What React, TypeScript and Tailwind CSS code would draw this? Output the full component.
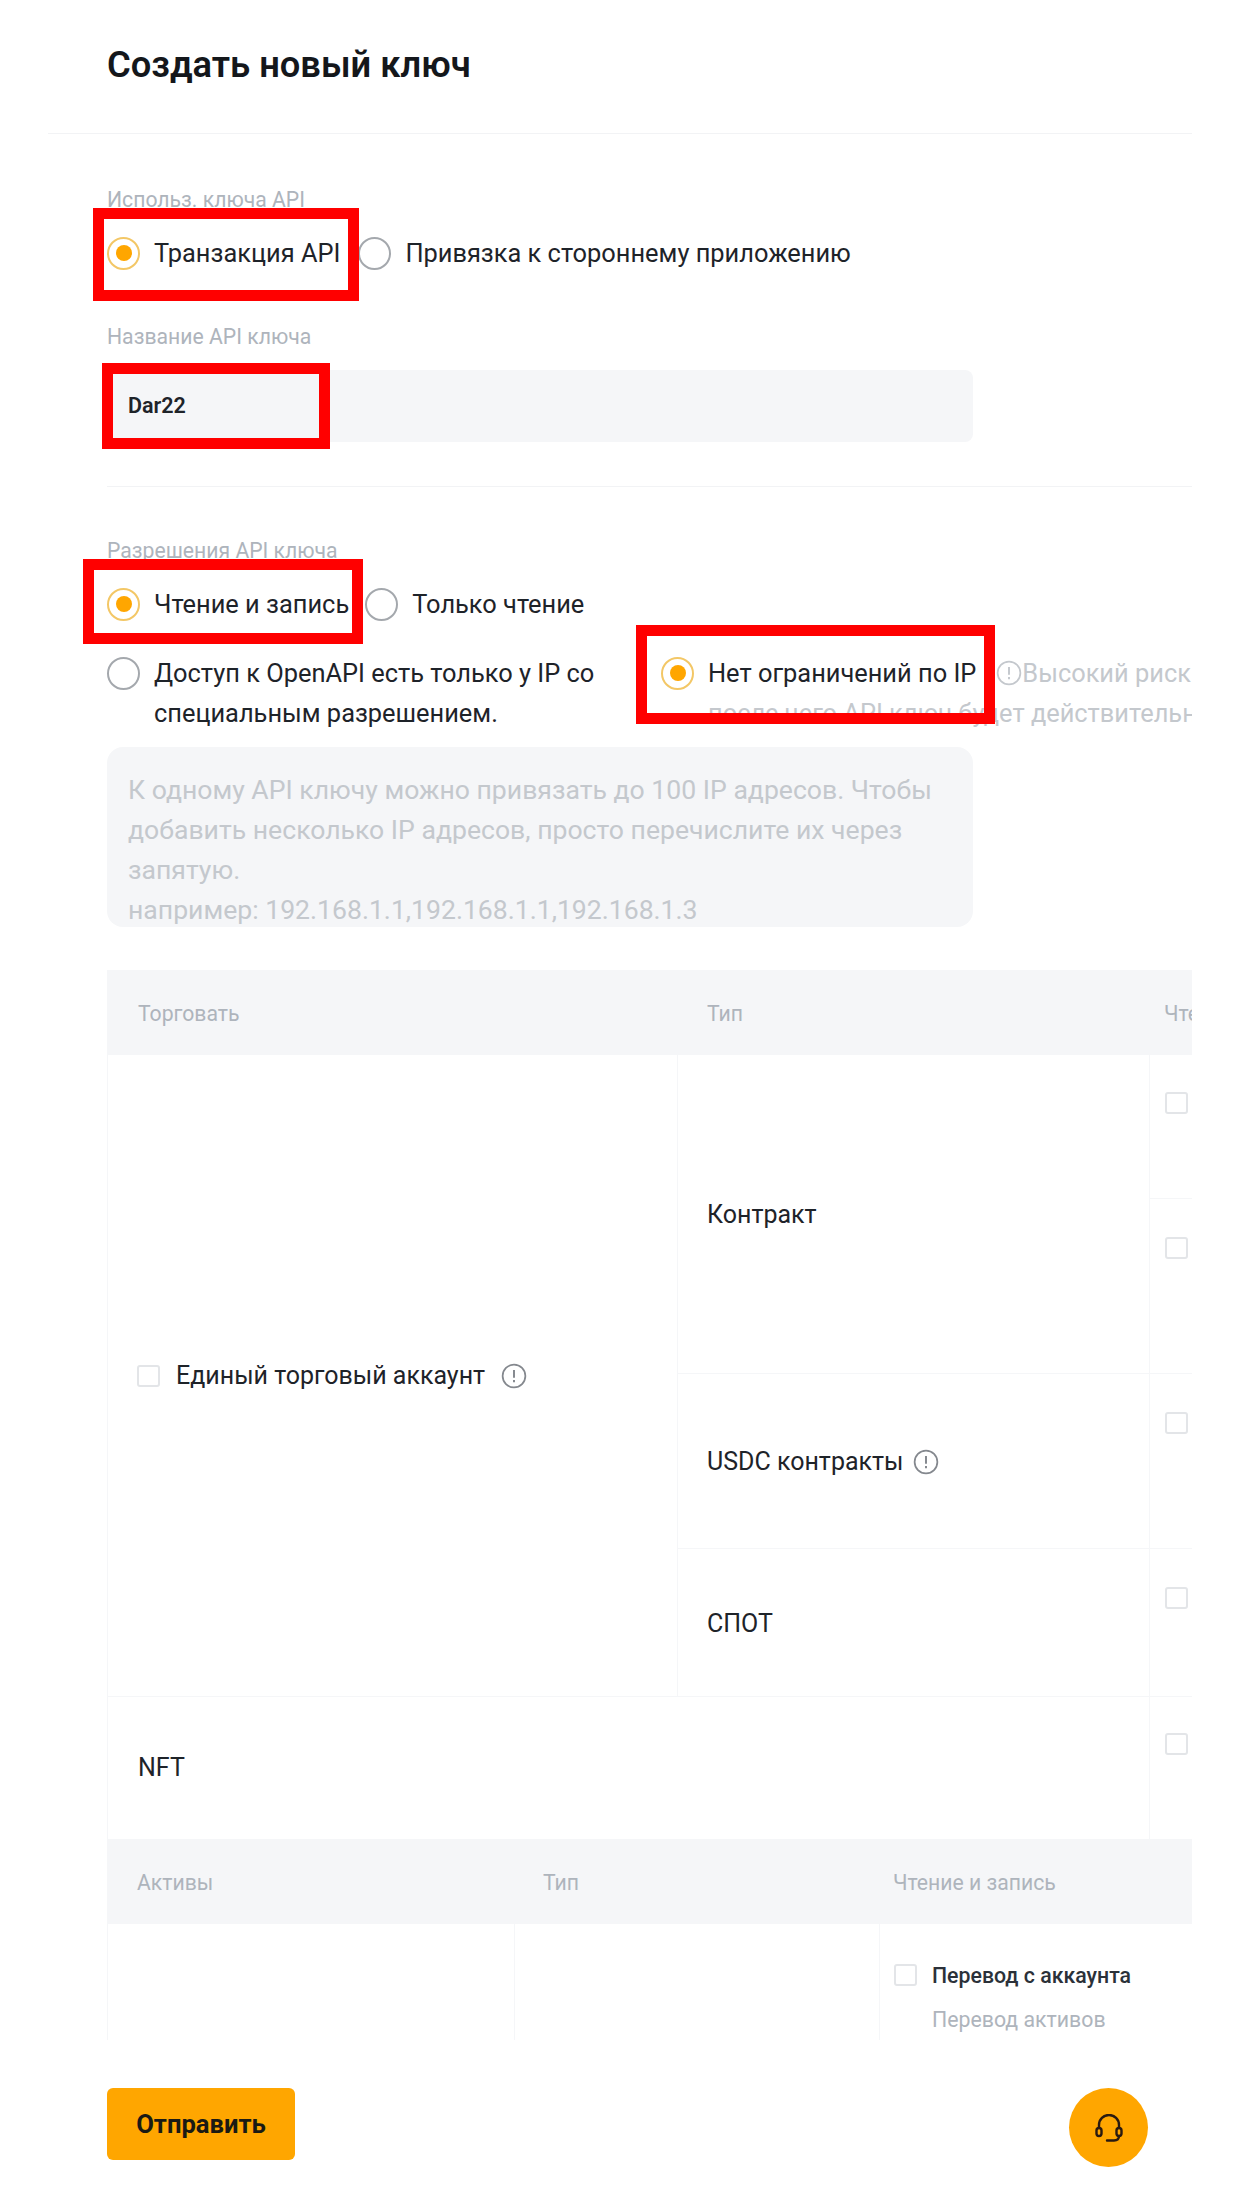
const FONT = "font-['Roboto','Noto_Sans',sans-serif]";

function Radio({ on }: { on?: boolean }) {
  return (
    <span className={`flex h-[33px] w-[33px] shrink-0 items-center justify-center rounded-full border-2 ${on ? 'border-[#f3c766]' : 'border-[#a4a8ad]'}`}>
      {on && <span className="h-[16px] w-[16px] rounded-full bg-[#ffa600]" />}
    </span>
  );
}

function Info({ className = '' }: { className?: string }) {
  return (
    <svg viewBox="0 0 24 24" fill="none" className={`h-[26px] w-[26px] shrink-0 ${className}`} stroke="currentColor">
      <circle cx="12" cy="12" r="10.5" strokeWidth="1.6" />
      <path d="M12 6.5v7" strokeWidth="1.8" />
      <path d="M12 15.8v2" strokeWidth="1.8" />
    </svg>
  );
}

function Check() {
  return <span className="block h-[22px] w-[23px] shrink-0 rounded-[3px] border-2 border-[#e3e5e8] bg-white" />;
}

function Label({ children }: { children: React.ReactNode }) {
  return <div className="h-[28px] text-[21.2px] leading-[28px] text-[#aeb4bc]">{children}</div>;
}

function Option({ on, children }: { on?: boolean; children: React.ReactNode }) {
  return (
    <div className="flex items-center gap-[14px]">
      <Radio on={on} />
      <span className="whitespace-nowrap text-[25.4px] leading-[40px] text-[#1e2329]">{children}</span>
    </div>
  );
}

function Mark({ className }: { className: string }) {
  return <div className={`pointer-events-none absolute border-[11px] border-[#ff0000] ${className}`} />;
}

export default function App() {
  return (
    <div className={`relative h-[2191px] w-[1242px] overflow-hidden bg-white ${FONT}`}>
      <div className="h-[2040px] w-[1192px] overflow-hidden">
        <div className="ml-[48px] flex h-[134px] items-center border-b border-[#f2f3f5] pb-[4px] pl-[59px]">
          <h1 className="text-[36.3px] font-semibold leading-[44px] text-[#14171b]">Создать новый ключ</h1>
        </div>

        <div className="pl-[107px]">
          <div className="pt-[52px]"><Label>Использ. ключа API</Label></div>
          <div className="mt-[19px] flex h-[40px] items-center gap-[18px]">
            <Option on>Транзакция API</Option>
            <Option>Привязка к стороннему приложению</Option>
          </div>
          <div className="mt-[50px]"><Label>Название API ключа</Label></div>
          <div className="mt-[19px] flex h-[72px] w-[866px] items-center rounded-[8px] bg-[#f5f6f8] pl-[21px] text-[21.5px] font-semibold text-[#1e2329]">Dar22</div>
          <div className="mt-[44px] border-t border-[#f2f3f5]" />

          <div className="mt-[50px]"><Label>Разрешения API ключа</Label></div>
          <div className="mt-[19px] flex h-[40px] items-center gap-[16px]">
            <Option on>Чтение и запись</Option>
            <Option>Только чтение</Option>
          </div>
          <div className="mt-[29px] flex items-start">
            <div className="flex w-[554px] shrink-0 gap-[14px]">
              <div className="pt-[4px]"><Radio /></div>
              <span className="w-[470px] text-[25.4px] leading-[40px] text-[#1e2329]">Доступ к OpenAPI есть только у IP со специальным разрешением.</span>
            </div>
            <div className="min-w-0 flex-1">
              <div className="flex items-center whitespace-nowrap">
                <Option on>Нет ограничений по IP</Option>
                <Info className="ml-[20px] text-[#c4c8cd]" />
                <span className="text-[25.4px] leading-[40px] text-[#c4c8cd]">Высокий риск</span>
              </div>
              <div className="whitespace-nowrap pl-[47px] text-[25.4px] leading-[40px] text-[#c4c8cd]">после чего API ключ будет действительным</div>
            </div>
          </div>

          <div className="mt-[14px] h-[180px] w-[866px] overflow-hidden rounded-[16px] bg-[#f5f6f8] px-[21px] pt-[23px] text-[26.6px] leading-[40px] text-[#c4c8cd]">
            <p>К одному API ключу можно привязать до 100 IP адресов. Чтобы добавить несколько IP адресов, просто перечислите их через запятую.</p>
            <p>например: 192.168.1.1,192.168.1.1,192.168.1.3</p>
          </div>

          <div className="mt-[43px] flex h-[85px] items-center whitespace-nowrap bg-[#f5f6f8] pt-[2px] text-[21.2px] text-[#aeb4bc]">
            <span className="w-[600px] shrink-0 pl-[31px]">Торговать</span>
            <span className="w-[457px] shrink-0">Тип</span>
            <span>Чтение и запись</span>
          </div>

          <div className="grid w-[1300px] grid-cols-[569px_472px_1fr] grid-rows-[144px_175px_175px_147px_143px] border-l border-[#f5f6f8] text-[25px] text-[#1e2329]">
            <div className="col-start-1 row-span-4 row-start-1 flex items-center gap-[16px] pl-[29px]">
              <Check />
              <span>Единый торговый аккаунт</span>
              <Info className="text-[#84888e]" />
            </div>
            <div className="col-start-2 row-span-2 row-start-1 flex items-center border-b border-l border-[#f5f6f8] pl-[29px] pt-[2px]">Контракт</div>
            <div className="col-start-2 row-start-3 flex items-center gap-[10px] border-b border-l border-[#f5f6f8] pl-[29px] pt-[2px]">
              <span>USDC контракты</span>
              <Info className="text-[#84888e]" />
            </div>
            <div className="col-start-2 row-start-4 flex items-center border-l border-[#f5f6f8] pl-[29px] pt-[2px]">СПОТ</div>
            <div className="col-start-3 row-start-1 border-b border-l border-[#f5f6f8] pl-[15px] pt-[37px]"><Check /></div>
            <div className="col-start-3 row-start-2 border-b border-l border-[#f5f6f8] pl-[15px] pt-[38px]"><Check /></div>
            <div className="col-start-3 row-start-3 border-b border-l border-[#f5f6f8] pl-[15px] pt-[38px]"><Check /></div>
            <div className="col-start-3 row-start-4 border-l border-[#f5f6f8] pl-[15px] pt-[38px]"><Check /></div>
            <div className="col-span-2 col-start-1 row-start-5 flex items-center border-t border-[#f5f6f8] pl-[30px]">NFT</div>
            <div className="col-start-3 row-start-5 border-l border-t border-[#f5f6f8] pl-[15px] pt-[36px]"><Check /></div>
          </div>

          <div className="flex h-[85px] items-center bg-[#f5f6f8] pt-[2px] text-[21.2px] text-[#aeb4bc]">
            <span className="w-[436px] shrink-0 pl-[30px]">Активы</span>
            <span className="w-[350px] shrink-0">Тип</span>
            <span>Чтение и запись</span>
          </div>
          <div className="grid h-[200px] grid-cols-[406px_365px_1fr] border-l border-[#f5f6f8]">
            <div />
            <div className="border-l border-[#f5f6f8]" />
            <div className="border-l border-[#f5f6f8] pl-[14px] pt-[36px]">
              <div className="flex items-center gap-[15px]">
                <Check />
                <span className="mt-[2px] whitespace-nowrap text-[21.3px] font-medium leading-[28px] text-[#2b3139]">Перевод с аккаунта</span>
              </div>
              <div className="mt-[16px] pl-[38px] text-[21.3px] leading-[28px] text-[#aeb4bc]">Перевод активов</div>
            </div>
          </div>
        </div>
      </div>

      <div className="flex items-start justify-between pl-[107px] pr-[94px] pt-[48px]">
        <button className="flex h-[72px] w-[188px] items-center justify-center rounded-[6px] bg-[#ffa600] text-[25.6px] font-bold text-[#1a1a14]">Отправить</button>
        <button className="flex h-[79px] w-[79px] items-center justify-center rounded-full bg-[#ffa600]">
          <svg viewBox="0 0 28 28" fill="none" stroke="#2a1a10" strokeWidth="2.4" strokeLinecap="round" className="h-[28px] w-[28px]">
            <path d="M4 14v-3a10 10 0 0 1 20 0v3" />
            <rect x="1.5" y="14" width="5" height="8" rx="2.5" />
            <rect x="21.5" y="14" width="5" height="8" rx="2.5" />
            <path d="M24 22c0 3-2 4.5-5 4.5h-7" />
          </svg>
        </button>
      </div>

      <Mark className="left-[93px] top-[208px] h-[93px] w-[266px]" />
      <Mark className="left-[102px] top-[363px] h-[86px] w-[228px]" />
      <Mark className="left-[83px] top-[559px] h-[85px] w-[280px]" />
      <Mark className="left-[636px] top-[625px] h-[99px] w-[359px]" />
    </div>
  );
}
